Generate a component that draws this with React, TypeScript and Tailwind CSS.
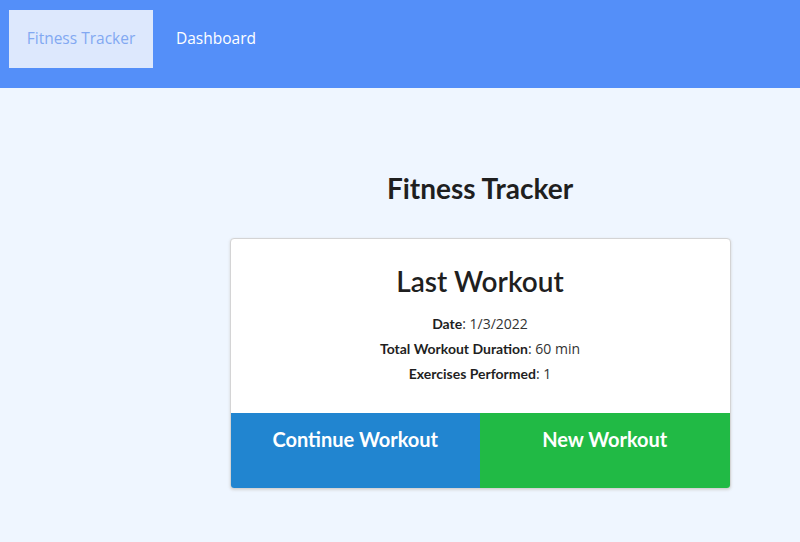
import React from 'react';

const lato = { fontFamily: 'Lato, "Open Sans", sans-serif' };

const Detail: React.FC<{ label: string; value: string }> = ({ label, value }) => (
  <p className="text-[14px] leading-[25px] text-[#1f1f1f]">
    <strong className="font-bold" style={lato}>{label}</strong>
    <span className="font-['Open_Sans',sans-serif] text-[#333]">: {value}</span>
  </p>
);

export default function App() {
  return (
    <div className="min-h-[542px] bg-[#eff6ff] font-['Open_Sans',sans-serif]">
      <nav className="flex h-[88px] items-start gap-[2px] bg-[#548ff9] pl-[9px] pt-[10px]">
        <a className="flex h-[58px] w-[144px] items-center justify-center bg-[#dde8fd] text-[15.5px] text-[#82a8f2]">
          Fitness Tracker
        </a>
        <a className="flex h-[58px] items-center px-[21px] text-[15.5px] text-white">Dashboard</a>
      </nav>

      <main className="flex flex-col items-center pl-[160px] pt-[83px]">
        <h1 className="text-[28px] font-bold leading-[34px] text-[#1f1f1f]" style={lato}>
          Fitness Tracker
        </h1>
        <div className="mt-[33px] w-[501px] overflow-hidden rounded-[4px] border border-[#d4d4d5] bg-white shadow-[0_1px_3px_0_#d4d4d5]">
          <div className="flex flex-col items-center pb-[27px] pt-[24px]">
            <h2 className="mb-[12px] text-[28px] font-semibold leading-[36px] text-[#1f1f1f]" style={lato}>
              Last Workout
            </h2>
            <Detail label="Date" value="1/3/2022" />
            <Detail label="Total Workout Duration" value="60 min" />
            <Detail label="Exercises Performed" value="1" />
          </div>
          <div className="grid h-[75px] grid-cols-2">
            <button className="flex justify-center bg-[#2185d0] pt-[11px] text-[20px] font-bold text-white" style={lato}>
              Continue Workout
            </button>
            <button className="flex justify-center bg-[#21ba45] pt-[11px] text-[20px] font-bold text-white" style={lato}>
              New Workout
            </button>
          </div>
        </div>
      </main>
    </div>
  );
}
